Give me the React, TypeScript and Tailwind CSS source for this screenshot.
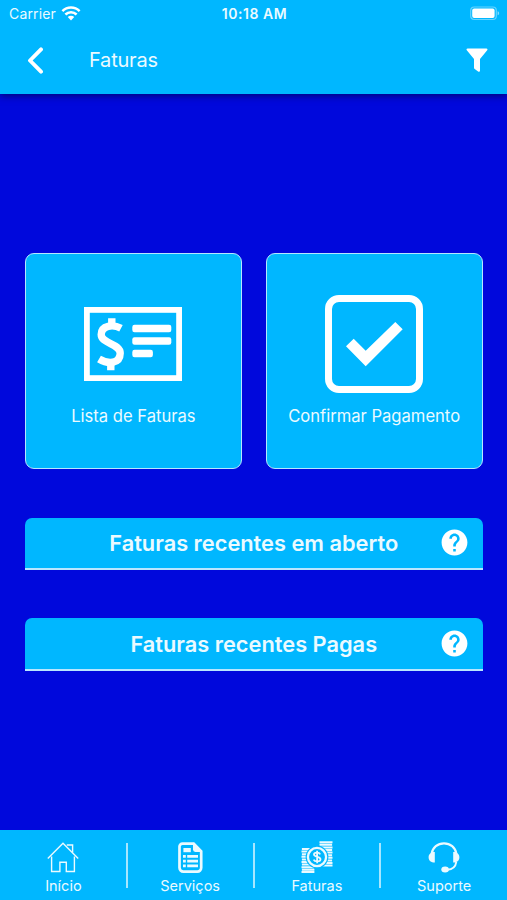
import type { ReactNode } from 'react';
import { MdHelp } from 'react-icons/md';

function WifiIcon() {
  return (
    <svg width="20" height="15" viewBox="0 0 20 15" fill="none" stroke="white" strokeWidth="2.5">
      <path d="M1.4 5.1a12.3 12.3 0 0 1 17.2 0" />
      <path d="M4.4 8.5a7.9 7.9 0 0 1 11.2 0" />
      <path d="M10 14.4l-3.2-3.3a4.6 4.6 0 0 1 6.4 0z" fill="white" stroke="none" />
    </svg>
  );
}

function BatteryIcon() {
  return (
    <svg width="30" height="15" viewBox="0 0 30 15">
      <rect x="0.7" y="1" width="25.6" height="12.5" rx="3.5" fill="none" stroke="white" strokeOpacity="0.4" strokeWidth="1.2" />
      <rect x="2.2" y="2.6" width="22.4" height="9.4" rx="2" fill="white" />
      <path d="M27.6 5.3c2 .6 2 3.4 0 4z" fill="white" fillOpacity="0.5" />
    </svg>
  );
}

function InvoiceIcon() {
  return (
    <svg width="98" height="74" viewBox="0 0 98 74" fill="none" stroke="white">
      <rect x="2.9" y="2.9" width="92.2" height="68.2" strokeWidth="5.8" />
      <path d="M37 21.2C29 17 17.3 18.3 17.2 27.5C17.2 37 36.2 36.2 36.2 46.3C36.1 57.5 23.5 57 15 52" strokeWidth="7.4" />
      <path d="M27.8 11.3v8M26.8 54.5v8.7" strokeWidth="7.4" />
      <g fill="white" stroke="none">
        <rect x="48.3" y="17.7" width="39" height="7.5" rx="2.2" />
        <rect x="48.3" y="30.2" width="39" height="7.5" rx="2.2" />
        <rect x="48.3" y="42.7" width="20.6" height="7.5" rx="2.2" />
      </g>
    </svg>
  );
}

function CheckIcon() {
  return (
    <svg width="98" height="98" viewBox="0 0 98 98">
      <rect x="3.5" y="3.5" width="91" height="91" rx="10.5" fill="none" stroke="white" strokeWidth="7" />
      <path d="M21 51.3l7.7-7.6 12 12L70.3 27l7.4 7.3-37 37z" fill="white" />
    </svg>
  );
}

function HomeIcon() {
  return (
    <svg width="32" height="31" viewBox="0 0 32 31" fill="none" stroke="currentColor" strokeWidth="1.4">
      <path d="M.8 16.6L16 1.3l15.2 15.3" />
      <path d="M4.6 14.5v15h8.3v-9.3h6.4v9.3h8.1v-15" />
      <path d="M19.8 3h5.8v7.4" />
    </svg>
  );
}

function ServicesIcon() {
  return (
    <svg width="25" height="31" viewBox="0 0 25 31">
      <path
        d="M4.5 1.6h11.2l7.5 7.6v16.6a3.8 3.8 0 0 1-3.8 3.8H5.3a3.8 3.8 0 0 1-3.8-3.8V4.6a3 3 0 0 1 3-3z"
        fill="none"
        stroke="currentColor"
        strokeWidth="2.7"
      />
      <path d="M15 .6l9 9.4h-6.6a2.4 2.4 0 0 1-2.4-2.4z" fill="currentColor" />
      <rect x="5.4" y="6" width="7.4" height="4.2" fill="currentColor" />
      <path d="M5 14.4h2.8M9.2 14.4h10.8M5 19.1h2.8M9.2 19.1h10.8M5 23.8h2.8M9.2 23.8h10.8" stroke="currentColor" strokeWidth="2.8" />
    </svg>
  );
}

function CoinsIcon() {
  return (
    <svg width="32" height="32" viewBox="0 0 32 32">
      <path
        d="M18.5 1.2h13M18.5 3.8h12.6M18.5 6.4h13M18.5 9h12.6M18.5 11.6h13M18.5 14.2h12.6M18.5 16.8h13M18.5 19.4h12.6M18.5 22h13M18.5 24.4h13"
        stroke="currentColor"
        strokeWidth="2"
      />
      <path
        d="M.9 8h12.5M.5 10.6h12.5M.9 13.2h12.5M.5 15.8h12.5M.9 18.4h12.5M.5 21h12.5M.9 23.6h12.5M.5 26.2h12.5M.9 28.8h12.5M.5 31h12.9"
        stroke="currentColor"
        strokeWidth="2"
      />
      <circle cx="16" cy="16" r="11.4" fill="#00b7ff" />
      <circle cx="16" cy="16" r="9.1" fill="none" stroke="currentColor" strokeWidth="2.3" />
      <path d="M19.2 13.3c-1-2.1-6.2-2.2-6.2.3 0 2.9 6.5 1.7 6.5 4.7 0 2.8-5.8 2.7-6.9.3M16.1 9.8v12.4" fill="none" stroke="currentColor" strokeWidth="1.8" />
    </svg>
  );
}

function HeadsetIcon() {
  return (
    <svg width="32" height="31" viewBox="0 0 32 31" fill="none" stroke="currentColor">
      <path d="M3.6 11.8C4.6 5.3 9.7 1.3 16 1.3s11.4 4 12.4 10.5" strokeWidth="2.2" />
      <path d="M6.8 10v10.6C3 20.6.6 18.6.6 15.3S3 10 6.8 10zM25.2 10v10.6c3.8 0 6.2-2 6.2-5.3S29 10 25.2 10z" fill="currentColor" stroke="none" />
      <path d="M28.3 19.8c-.7 5-3.3 7.6-9 8" strokeWidth="1.9" />
      <ellipse cx="17.1" cy="27.6" rx="3.8" ry="3" fill="currentColor" stroke="none" />
    </svg>
  );
}

function MenuCard({ icon, label }: { icon: ReactNode; label: string }) {
  return (
    <button className="flex h-[216.5px] flex-1 flex-col items-center rounded-[9px] border-[1.5px] border-[#b5e6ff] bg-[#00b7ff]">
      <span className="mt-[41.4px] flex h-[98px] items-center">{icon}</span>
      <span className="mt-[11px] text-[16.6px] leading-6 whitespace-nowrap">{label}</span>
    </button>
  );
}

function SectionBar({ title }: { title: string }) {
  return (
    <div className="grid h-[52.5px] grid-cols-[42px_1fr_42px] items-center rounded-t-[7px] border-b-2 border-[#b9e6ff] bg-[#00b7ff] pr-[7px] pl-[7px]">
      <h2 className="col-start-2 pt-px text-center text-[21.8px] font-semibold whitespace-nowrap">{title}</h2>
      <MdHelp className="size-[31px] justify-self-center text-white" />
    </div>
  );
}

const tabs = [
  { label: 'Início', icon: <HomeIcon /> },
  { label: 'Serviços', icon: <ServicesIcon /> },
  { label: 'Faturas', icon: <CoinsIcon /> },
  { label: 'Suporte', icon: <HeadsetIcon /> },
];

export default function App() {
  return (
    <div className="flex h-[900px] w-[507px] flex-col overflow-hidden bg-[#0008dc] font-['Inter',sans-serif] text-[#ebfaff]">
      <header className="h-[94px] shrink-0 bg-[#00b7ff] shadow-[0_2px_7px_rgba(0,0,40,0.55)]">
        <div className="grid h-[27px] grid-cols-3 items-center pr-[7px] pl-[9px] text-[14px]">
          <div className="flex items-center gap-[5px]">
            <span className="tracking-[0.15px]">Carrier</span>
            <WifiIcon />
          </div>
          <span className="text-center font-semibold tracking-[0.55px]">10:18 AM</span>
          <span className="justify-self-end">
            <BatteryIcon />
          </span>
        </div>
        <div className="flex h-[66px] items-center pr-[19px] pl-[27px]">
          <svg width="17" height="27" viewBox="0 0 17 27" fill="none" stroke="white" strokeWidth="3.9" strokeLinecap="round" strokeLinejoin="round">
            <path d="M14 2.4L3 13.5l11 11.2" />
          </svg>
          <h1 className="ml-[45px] text-[20px] tracking-[-0.2px]">Faturas</h1>
          <svg className="ml-auto" width="22" height="24" viewBox="0 0 22 24" fill="white">
            <path d="M1.6.6h18.8c1 0 1.4 1 .8 1.7L14 11v11.4c0 1-1 1.6-1.9 1L8.7 21c-.5-.4-.7-.8-.7-1.3V11L.8 2.3C.2 1.6.6.6 1.6.6z" />
          </svg>
        </div>
      </header>

      <main className="flex-1 px-[25px] pt-[158.5px]">
        <div className="-mr-[0.5px] flex gap-6">
          <MenuCard icon={<InvoiceIcon />} label="Lista de Faturas" />
          <MenuCard icon={<CheckIcon />} label="Confirmar Pagamento" />
        </div>
        <div className="mt-[48.5px] -mr-[0.5px] flex flex-col gap-[48.4px]">
          <SectionBar title="Faturas recentes em aberto" />
          <SectionBar title="Faturas recentes Pagas" />
        </div>
      </main>

      <nav className="grid h-[70px] shrink-0 grid-cols-4 bg-[#00b7ff]">
        {tabs.map((tab, i) => (
          <div key={tab.label} className="flex">
            <button className="flex flex-1 flex-col items-center pt-[11px] pl-px">
              <span className="flex h-8 items-center">{tab.icon}</span>
              <span className="mt-[3px] text-[14.5px] leading-5">{tab.label}</span>
            </button>
            {i < tabs.length - 1 && <div className="-mr-px mt-[13px] h-[45px] w-[2px] bg-[#a6e6ff]" />}
          </div>
        ))}
      </nav>
    </div>
  );
}
